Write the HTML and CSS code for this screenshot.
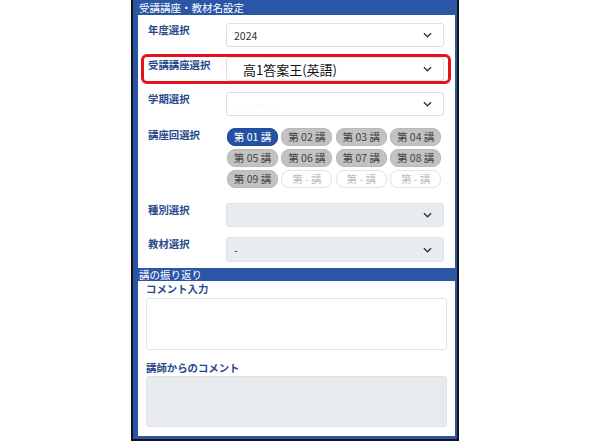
FILE: index.html
```html
<!DOCTYPE html>
<html lang="ja">
<head>
<meta charset="utf-8">
<title>受講講座・教材名設定</title>
<link rel="stylesheet" href="styles.css">
</head>
<body>
<div class="frame">
  <div class="bar bar-top">受講講座・教材名設定</div>
  <div class="section section-1">
    <div class="row row-year">
      <div class="label">年度選択</div>
      <div class="select"><span class="val">2024</span><svg class="chev" viewBox="0 0 10 6" width="9" height="6"><polyline points="1,1 5,5 9,1" fill="none" stroke="#333" stroke-width="1.5"/></svg></div>
    </div>
    <div class="row row-course">
      <div class="label">受講講座選択</div>
      <div class="select"><span class="val big">高1答案王(英語)</span><svg class="chev" viewBox="0 0 10 6" width="9" height="6"><polyline points="1,1 5,5 9,1" fill="none" stroke="#333" stroke-width="1.5"/></svg></div>
    </div>
    <div class="row row-term">
      <div class="label">学期選択</div>
      <div class="select"><span class="val faint">- -&nbsp;&nbsp;&nbsp;&nbsp;- - -&nbsp;&nbsp;&nbsp;- -</span><svg class="chev" viewBox="0 0 10 6" width="9" height="6"><polyline points="1,1 5,5 9,1" fill="none" stroke="#333" stroke-width="1.5"/></svg></div>
    </div>
    <div class="row row-lecture">
      <div class="label">講座回選択</div>
      <div class="btns">
        <span class="btn on">第 01 講</span>
        <span class="btn">第 02 講</span>
        <span class="btn">第 03 講</span>
        <span class="btn">第 04 講</span>
        <span class="btn">第 05 講</span>
        <span class="btn">第 06 講</span>
        <span class="btn">第 07 講</span>
        <span class="btn">第 08 講</span>
        <span class="btn">第 09 講</span>
        <span class="btn empty">第 - 講</span>
        <span class="btn empty">第 - 講</span>
        <span class="btn empty">第 - 講</span>
      </div>
    </div>
    <div class="row row-kind">
      <div class="label">種別選択</div>
      <div class="select disabled"><span class="val"></span><svg class="chev" viewBox="0 0 10 6" width="9" height="6"><polyline points="1,1 5,5 9,1" fill="none" stroke="#333" stroke-width="1.5"/></svg></div>
    </div>
    <div class="row row-material">
      <div class="label">教材選択</div>
      <div class="select disabled tall"><span class="val">-</span><svg class="chev" viewBox="0 0 10 6" width="9" height="6"><polyline points="1,1 5,5 9,1" fill="none" stroke="#333" stroke-width="1.5"/></svg></div>
    </div>
  </div>
  <div class="bar bar-mid">講の振り返り</div>
  <div class="section section-2">
    <div class="label label-comment">コメント入力</div>
    <div class="textbox"></div>
    <div class="label label-teacher">講師からのコメント</div>
    <div class="textbox readonly"></div>
  </div>
</div>
</body>
</html>
```

FILE: styles.css
```css
html, body {
  margin: 0;
  padding: 0;
  background: #ffffff;
}
body {
  font-family: "Noto Sans CJK JP", "Noto Sans", sans-serif;
  width: 590px;
  height: 443px;
  overflow: hidden;
}
.frame {
  margin-left: 131px;
  width: 328px;
  height: 441px;
  box-sizing: border-box;
  border: 2px solid #141414;
  border-top: 0;
  background: #2b56a6;
  padding: 0 2px 3px 5px;
  display: flex;
  flex-direction: column;
}
.bar {
  color: #ffffff;
  font-size: 10.5px;
  padding-left: 1px;
  white-space: nowrap;
}
.bar-top {
  height: 15px;
  line-height: 15px;
}
.bar-mid {
  height: 13px;
  line-height: 13px;
}
.section {
  background: #ffffff;
}
.section-1 {
  height: 253px;
  box-sizing: border-box;
  padding-top: 8px;
}
.section-2 {
  flex: 1;
  padding: 1px 8px 0 8px;
}
.row {
  display: grid;
  grid-template-columns: 78px 1fr;
  align-items: start;
  padding: 0 11px 0 10px;
}
.label {
  color: #29498a;
  font-weight: bold;
  font-size: 10.4px;
  line-height: 14px;
  white-space: nowrap;
}
.select {
  height: 24px;
  box-sizing: border-box;
  border: 1px solid #dcdfe3;
  border-radius: 3px;
  background: #ffffff;
  display: flex;
  align-items: center;
  padding: 0 11px 0 7px;
}
.select .val {
  flex: 1;
  font-size: 10.5px;
  color: #333;
  white-space: nowrap;
}
.select .val.big {
  font-size: 13px;
  color: #111;
  padding-left: 9px;
}
.select .val.faint {
  color: #ececec;
  font-size: 9px;
}
.select.disabled {
  background: #e9ecef;
  border-color: #dee2e6;
}
.select.tall {
  height: 25px;
}
.row-course {
  margin: 7px 4px 0 3px;
  border: 3px solid #e5121b;
  border-radius: 6px;
  padding: 0 4px;
}
.row-course .label {
  margin-top: 1px;
}
.row-term {
  margin-top: 8px;
}
.row-lecture {
  margin-top: 12px;
}
.row-kind {
  margin-top: 15px;
}
.row-material {
  margin-top: 10px;
}
.btns {
  display: grid;
  grid-template-columns: repeat(4, 51px);
  column-gap: 3.4px;
  row-gap: 3px;
  margin-left: 1px;
}
.btn {
  height: 18px;
  box-sizing: border-box;
  border-radius: 8px;
  background: #c2c2c2;
  border: 1px solid #b9b9b9;
  color: #444444;
  font-size: 10.5px;
  line-height: 16px;
  text-align: center;
  white-space: nowrap;
}
.btn.on {
  background: #2451a3;
  border-color: #1f4a97;
  color: #ffffff;
}
.btn.empty {
  background: #ffffff;
  border-color: #e2e2e2;
  color: #bdbdbd;
}
.textbox {
  height: 52px;
  box-sizing: border-box;
  border: 1px solid #e0e2e5;
  border-radius: 3px;
  background: #ffffff;
  margin-top: 2px;
}
.textbox.readonly {
  height: 51px;
  background: #e8ebee;
  border-color: #dfe2e6;
  margin-top: 1px;
}
.label-teacher {
  margin-top: 11px;
}
.chev {
  flex: none;
}
```
